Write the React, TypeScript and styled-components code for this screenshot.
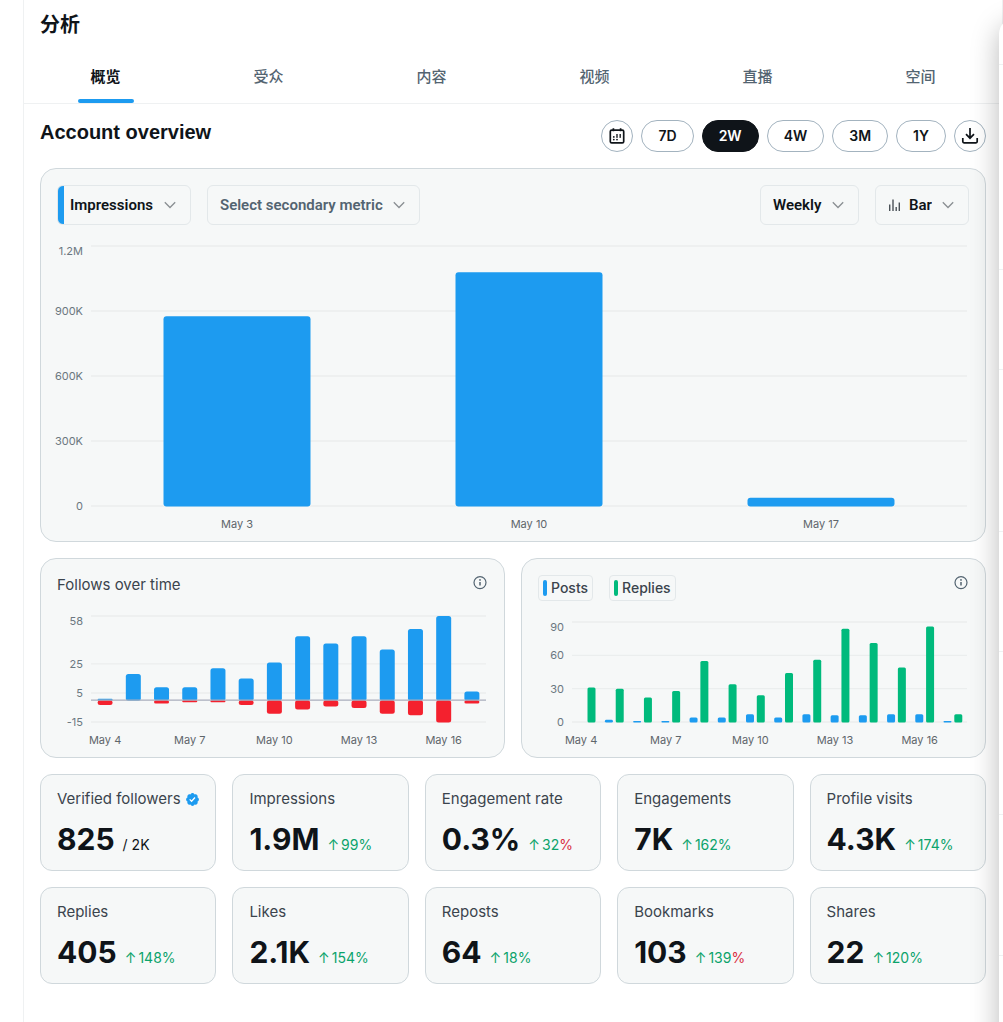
import React, { useLayoutEffect, useRef, useState } from 'react';
import styled, { createGlobalStyle } from 'styled-components';

const colors = {
  ink: '#0f1419',
  body: '#3b444d',
  muted: '#536471',
  axis: '#6b7780',
  line: '#eff1f2',
  grid: '#ebeeee',
  card: '#f6f8f8',
  cardBorder: '#d0d8dc',
  controlBorder: '#e3e8ea',
  blue: '#1d9bf0',
  green: '#00ba7c',
  deltaGreen: '#0ba36b',
  red: '#f4212e',
};

const fonts = {
  base: 'Inter, "Noto Sans CJK SC", sans-serif',
  control: 'Roboto, "Noto Sans CJK SC", sans-serif',
  title: '"Liberation Sans", "Noto Sans CJK SC", sans-serif',
  cjk: '"Noto Sans CJK SC", sans-serif',
};

const GlobalStyle = createGlobalStyle`
  * { box-sizing: border-box; }
  body {
    margin: 0;
    background: #fff;
    color: ${colors.ink};
    font-family: ${fonts.base};
    font-size: 15px;
  }
  h1, h2, h3, p { margin: 0; }
  button, select { font: inherit; color: inherit; cursor: pointer; }
`;

const Page = styled.div`
  position: relative;
  min-height: 100vh;
  padding-left: 23px;
`;

const Main = styled.main`
  min-height: 100vh;
  border-left: 1px solid ${colors.line};
  border-right: 1px solid ${colors.line};
`;

const PageHeader = styled.header`
  display: flex;
  align-items: center;
  height: 48px;
  padding: 0 16px;
`;

const PageTitle = styled.h1`
  font-family: ${fonts.cjk};
  font-size: 20px;
  line-height: 24px;
  font-weight: 700;
`;

const Tabs = styled.nav`
  display: flex;
  height: 56px;
  border-bottom: 1px solid ${colors.line};
`;

const Tab = styled.a<{ $active: boolean }>`
  flex: 1;
  display: flex;
  flex-direction: column;
  align-items: center;
  font-family: ${fonts.cjk};
  font-size: 15px;
  line-height: 20px;
  font-weight: ${p => (p.$active ? 700 : 500)};
  color: ${p => (p.$active ? colors.ink : colors.muted)};
  text-decoration: none;
`;

const TabLabel = styled.span`
  flex: 1;
  display: flex;
  align-items: center;
  padding-top: 4px;
`;

const TabIndicator = styled.span<{ $active: boolean }>`
  width: 56px;
  height: 4px;
  border-radius: 4px;
  background: ${p => (p.$active ? colors.blue : 'transparent')};
`;

const Content = styled.div`
  display: grid;
  gap: 16px;
  padding: 16px;
`;

const Overview = styled.div`
  display: flex;
  justify-content: space-between;
  align-items: flex-start;
`;

const SectionTitle = styled.h2`
  font-family: ${fonts.title};
  font-size: 20px;
  line-height: 24px;
  font-weight: 700;
`;

const Toolbar = styled.div`
  display: flex;
  gap: 8px;
`;

const Pill = styled.button<{ $active?: boolean }>`
  height: 32px;
  padding: 0 16px;
  border: 1px solid ${p => (p.$active ? colors.ink : '#a3b3bf')};
  border-radius: 16px;
  background: ${p => (p.$active ? colors.ink : '#fff')};
  color: ${p => (p.$active ? '#fff' : colors.ink)};
  font-size: 14px;
  line-height: 20px;
  font-weight: 600;
`;

const RoundButton = styled(Pill)`
  display: grid;
  place-items: center;
  width: 32px;
  padding: 0;
`;

const Card = styled.section`
  min-width: 0;
  border: 1px solid ${colors.cardBorder};
  border-radius: 16px;
  background: ${colors.card};
  padding: 16px 16px 8px;
`;

const ControlBar = styled.div`
  display: flex;
  justify-content: space-between;
  margin-bottom: 8px;
`;

const ControlGroup = styled.div`
  display: flex;
  gap: 16px;
`;

const Dropdown = styled.label<{ $marked?: boolean }>`
  display: flex;
  align-items: center;
  gap: 8px;
  height: 40px;
  padding: 0 12px;
  border: 1px solid ${colors.controlBorder};
  border-radius: 6px;
  background: ${p => (p.$marked ? `linear-gradient(${colors.blue}, ${colors.blue}) 0 0 / 6px 100% no-repeat` : 'none')};
  color: #8a8f93;
`;

const SelectBox = styled.select<{ $muted?: boolean }>`
  appearance: none;
  border: 0;
  padding: 0;
  background: transparent;
  font-family: ${fonts.control};
  font-size: 15px;
  line-height: 20px;
  font-weight: 600;
  color: ${p => (p.$muted ? colors.muted : colors.ink)};
`;

const TwoColumns = styled.div`
  display: grid;
  grid-template-columns: repeat(2, minmax(0, 1fr));
  gap: 16px;
`;

const CardHeader = styled.div`
  display: flex;
  justify-content: space-between;
  align-items: flex-start;
  height: 26px;
`;

const CardTitle = styled.h3`
  font-size: 15px;
  line-height: 20px;
  font-weight: 400;
  color: ${colors.body};
`;

const InfoButton = styled.button`
  display: flex;
  padding: 0;
  border: 0;
  background: none;
  color: ${colors.muted};
`;

const LegendButton = styled.button`
  display: flex;
  align-items: center;
  gap: 4px;
  height: 26px;
  padding: 0 4px;
  border: 1px solid ${colors.controlBorder};
  border-radius: 4px;
  background: none;
  font-size: 14px;
  line-height: 20px;
  font-weight: 500;
  color: ${colors.body};
`;

const Swatch = styled.span<{ $color: string }>`
  width: 4px;
  height: 16px;
  border-radius: 2px;
  background: ${p => p.$color};
`;

const ChartFrame = styled.div`
  min-width: 0;
`;

const ChartSvg = styled.svg`
  display: block;
  width: 100%;
  overflow: visible;
  font-family: ${fonts.base};
  font-size: 11px;
`;

const StatGrid = styled.div`
  display: grid;
  grid-template-columns: repeat(5, minmax(0, 1fr));
  gap: 16px;
`;

const StatCard = styled.section`
  display: grid;
  gap: 16px;
  padding: 16px 12px 15px 16px;
  border: 1px solid ${colors.cardBorder};
  border-radius: 12px;
  background: ${colors.card};
  white-space: nowrap;
`;

const StatLabel = styled.h3`
  display: flex;
  align-items: center;
  gap: 4px;
  font-size: 15px;
  line-height: 16px;
  font-weight: 400;
  color: ${colors.body};
`;

const StatRow = styled.p`
  display: flex;
  align-items: baseline;
  gap: 8px;
  height: 32px;
`;

const StatValue = styled.strong`
  font-size: 30px;
  line-height: 32px;
  font-weight: 700;
`;

const StatTotal = styled.span`
  font-size: 14px;
  line-height: 16px;
`;

const Delta = styled.span`
  display: flex;
  align-items: baseline;
  gap: 2px;
  font-size: 14px;
  line-height: 16px;
  color: ${colors.deltaGreen};
`;

const Percent = styled.span<{ $red?: boolean }>`
  color: ${p => (p.$red ? '#d92f43' : 'inherit')};
`;

const OverlayLayer = styled.div`
  position: absolute;
  inset: 0;
  overflow: hidden;
  pointer-events: none;
`;

const Drawer = styled.aside`
  position: absolute;
  top: 18px;
  bottom: -48px;
  left: calc(100% - 4px);
  width: 320px;
  border-radius: 16px 0 0 0;
  background: #fff;
  box-shadow: 0 8px 28px rgba(0, 0, 0, 0.28);
`;

const DrawerRow = styled.div<{ $height: number }>`
  height: ${p => p.$height}px;
  border-bottom: 1px solid ${colors.line};
`;

function useWidth(initial: number) {
  const ref = useRef<HTMLDivElement>(null);
  const [width, setWidth] = useState(initial);
  useLayoutEffect(() => {
    const node = ref.current;
    if (!node) return;
    const measure = () => setWidth(node.clientWidth);
    measure();
    const observer = new ResizeObserver(measure);
    observer.observe(node);
    return () => observer.disconnect();
  }, []);
  return [ref, width] as const;
}

type Series = { color: string; values: number[] };
type ChartProps = {
  label: string;
  initialWidth: number;
  height: number;
  top: number;
  bottom: number;
  min: number;
  max: number;
  ticks: { value: number; text: string }[];
  series: Series[];
  grouped?: boolean;
  barWidth: (band: number) => number;
  radius: number;
  names: string[];
  every: number;
  zeroLine?: boolean;
};

const AXIS = 34;
const EDGE = 2;

function BarChart(p: ChartProps) {
  const [ref, width] = useWidth(p.initialWidth);
  const plot = width - AXIS - EDGE;
  const count = p.series[0].values.length;
  const band = plot / count;
  const bar = p.barWidth(band);
  const y = (v: number) => p.bottom - ((v - p.min) / (p.max - p.min)) * (p.bottom - p.top);
  const shift = p.grouped ? bar / 2 + 1.4 : 0;
  return (
    <ChartFrame ref={ref}>
      <ChartSvg height={p.height} role="img" aria-label={p.label}>
        {p.ticks.map(t => {
          const ty = y(t.value);
          return (
            <g key={t.text}>
              <line x1={AXIS} x2={width - EDGE} y1={ty} y2={ty} stroke={colors.grid} strokeWidth={1.4} />
              <text x={AXIS - 8} y={(t.value === p.max ? ty + 5 : ty) + 4} textAnchor="end" fill={colors.axis}>
                {t.text}
              </text>
            </g>
          );
        })}
        {p.series.map((s, si) =>
          s.values.map((v, i) => {
            if (!v) return null;
            const center = AXIS + band * (i + 0.5) + (si ? shift : -shift);
            const start = Math.min(y(v), y(0));
            const h = Math.abs(y(v) - y(0)) + 0.5;
            const r = Math.min(p.radius, h / 2);
            return <rect key={`${si}-${i}`} x={center - bar / 2} y={start} width={bar} height={h} rx={r} fill={s.color} />;
          }),
        )}
        {p.zeroLine && (
          <line x1={AXIS} x2={width - EDGE} y1={y(0)} y2={y(0)} stroke="#a9aebd" strokeWidth={1.3} />
        )}
        {p.names.map((n, i) => (
          <text
            key={n}
            x={AXIS + band * (i * p.every + 0.5) - (p.grouped ? 5 : 0)}
            y={p.height - 5}
            textAnchor="middle"
            fill="#5f666b"
          >
            {n}
          </text>
        ))}
      </ChartSvg>
    </ChartFrame>
  );
}

const Chevron = () => (
  <svg width="16" height="16" viewBox="0 0 16 16" fill="none" stroke="currentColor" strokeWidth="1.3" aria-hidden="true">
    <path d="M2.8 5.3 8 10.5l5.2-5.2" />
  </svg>
);

const BarsIcon = () => (
  <svg width="13" height="14" viewBox="0 0 13 14" fill="none" stroke="#4b5258" strokeWidth="1.4" aria-hidden="true">
    <path d="M1.7 6.5V13M5 1.5V13M8.2 9V13M11.3 4.5V13" />
  </svg>
);

const CalendarIcon = () => (
  <svg width="18" height="18" viewBox="0 0 18 18" fill="none" stroke={colors.ink} aria-hidden="true">
    <rect x="2.3" y="3.2" width="13.4" height="12.6" rx="1.4" strokeWidth="1.7" />
    <path d="M5.4 1.2v3M12.6 1.2v3" strokeWidth="1.7" />
    <g fill={colors.ink} stroke="none">
      <circle cx="9" cy="8" r="0.9" />
      <circle cx="12.2" cy="8" r="0.9" />
      <circle cx="5.8" cy="9.9" r="0.9" />
      <circle cx="9" cy="9.9" r="0.9" />
      <circle cx="12.2" cy="9.9" r="0.9" />
      <circle cx="5.8" cy="12.6" r="0.9" />
      <circle cx="9" cy="12.6" r="0.9" />
    </g>
  </svg>
);

const DownloadIcon = () => (
  <svg width="18" height="18" viewBox="0 0 18 18" fill="none" stroke={colors.ink} strokeWidth="1.7" aria-hidden="true">
    <path d="M9 1v10M5 7.2l4 4 4-4" />
    <path d="M1.8 11v3.6c0 .7.5 1.2 1.2 1.2h12c.7 0 1.2-.5 1.2-1.2V11" />
  </svg>
);

const InfoIcon = () => (
  <svg width="16" height="16" viewBox="0 0 16 16" fill="none" stroke="currentColor" strokeWidth="1.2" aria-hidden="true">
    <circle cx="8" cy="7.6" r="6" />
    <path d="M8 6.9v3.7" strokeWidth="1.5" />
    <circle cx="8" cy="4.9" r="0.9" fill="currentColor" stroke="none" />
  </svg>
);

const VerifiedIcon = () => (
  <svg width="15" height="15" viewBox="0 0 22 22" aria-label="Verified" role="img">
    <path
      fill={colors.blue}
      d="M20.396 11c-.018-.646-.215-1.275-.57-1.816-.354-.54-.852-.972-1.438-1.246.223-.607.27-1.264.14-1.897-.131-.634-.437-1.218-.882-1.687-.47-.445-1.053-.75-1.687-.882-.633-.13-1.29-.083-1.897.14-.273-.587-.704-1.086-1.245-1.44S11.647 1.62 11 1.604c-.646.017-1.273.213-1.813.568s-.969.854-1.24 1.44c-.608-.223-1.267-.272-1.902-.14-.635.13-1.22.436-1.69.882-.445.47-.749 1.055-.878 1.688-.13.633-.08 1.29.144 1.896-.587.274-1.087.705-1.443 1.245-.356.54-.555 1.17-.574 1.817.02.647.218 1.276.574 1.817.356.54.856.972 1.443 1.245-.224.606-.274 1.263-.144 1.896.13.634.433 1.218.877 1.688.47.443 1.054.747 1.687.878.633.132 1.29.084 1.897-.136.274.586.705 1.084 1.246 1.439.54.354 1.17.551 1.816.569.647-.016 1.276-.213 1.817-.567s.972-.854 1.245-1.44c.604.239 1.266.296 1.903.164.636-.132 1.22-.447 1.68-.907.46-.46.776-1.044.908-1.681s.075-1.299-.165-1.903c.586-.274 1.084-.705 1.439-1.246.354-.54.551-1.17.569-1.816z"
    />
    <path fill="#fff" d="m9.662 14.85-3.429-3.428 1.293-1.302 2.072 2.072 4.4-4.794 1.347 1.246z" />
  </svg>
);

const tabs = ['概览', '受众', '内容', '视频', '直播', '空间'];
const ranges = ['7D', '2W', '4W', '3M', '1Y'];
const days = ['May 4', 'May 7', 'May 10', 'May 13', 'May 16'];

type Stat = { label: string; value: string; total?: string; change?: string; red?: boolean };
const stats: Stat[] = [
  { label: 'Verified followers', value: '825', total: '2K' },
  { label: 'Impressions', value: '1.9M', change: '99' },
  { label: 'Engagement rate', value: '0.3%', change: '32', red: true },
  { label: 'Engagements', value: '7K', change: '162' },
  { label: 'Profile visits', value: '4.3K', change: '174' },
  { label: 'Replies', value: '405', change: '148' },
  { label: 'Likes', value: '2.1K', change: '154' },
  { label: 'Reposts', value: '64', change: '18' },
  { label: 'Bookmarks', value: '103', change: '139', red: true },
  { label: 'Shares', value: '22', change: '120' },
];

function Picker(p: { name: string; value: string; marked?: boolean; muted?: boolean; icon?: React.ReactNode }) {
  return (
    <Dropdown $marked={p.marked}>
      {p.icon}
      <SelectBox aria-label={p.name} $muted={p.muted}>
        <option>{p.value}</option>
      </SelectBox>
      <Chevron />
    </Dropdown>
  );
}

export default function App() {
  const [range, setRange] = useState('2W');
  return (
    <Page>
      <GlobalStyle />
      <Main>
        <PageHeader>
          <PageTitle>分析</PageTitle>
        </PageHeader>
        <Tabs>
          {tabs.map((t, i) => (
            <Tab key={t} href="#" $active={i === 0}>
              <TabLabel>{t}</TabLabel>
              <TabIndicator $active={i === 0} />
            </Tab>
          ))}
        </Tabs>
        <Content>
          <Overview>
            <SectionTitle>Account overview</SectionTitle>
            <Toolbar>
              <RoundButton aria-label="Choose dates">
                <CalendarIcon />
              </RoundButton>
              {ranges.map(r => (
                <Pill key={r} $active={r === range} onClick={() => setRange(r)}>
                  {r}
                </Pill>
              ))}
              <RoundButton aria-label="Download">
                <DownloadIcon />
              </RoundButton>
            </Toolbar>
          </Overview>

          <Card>
            <ControlBar>
              <ControlGroup>
                <Picker name="Primary metric" value="Impressions" marked />
                <Picker name="Secondary metric" value="Select secondary metric" muted />
              </ControlGroup>
              <ControlGroup>
                <Picker name="Interval" value="Weekly" />
                <Picker name="Chart type" value="Bar" icon={<BarsIcon />} />
              </ControlGroup>
            </ControlBar>
            <BarChart
              label="Impressions by week"
              initialWidth={912}
              height={300}
              top={13}
              bottom={273}
              min={0}
              max={1200}
              ticks={[1200, 900, 600, 300, 0].map(v => ({ value: v, text: v === 1200 ? '1.2M' : v ? `${v}K` : '0' }))}
              series={[{ color: colors.blue, values: [876, 1079, 38] }]}
              barWidth={b => b / 2 + 1}
              radius={3}
              names={['May 3', 'May 10', 'May 17']}
              every={1}
            />
          </Card>

          <TwoColumns>
            <Card>
              <CardHeader>
                <CardTitle>Follows over time</CardTitle>
                <InfoButton aria-label="About follows over time">
                  <InfoIcon />
                </InfoButton>
              </CardHeader>
              <BarChart
                label="Follows over time"
                initialWidth={431}
                height={148}
                top={15}
                bottom={121}
                min={-15}
                max={58}
                ticks={[58, 25, 5, -15].map(v => ({ value: v, text: String(v) }))}
                series={[
                  { color: colors.blue, values: [1, 18, 9, 9, 22, 15, 26, 44, 39, 44, 35, 49, 58, 6] },
                  { color: colors.red, values: [-3, 0, -2, -1, -1, -3, -9, -6, -4, -5, -9, -10, -15, -2] },
                ]}
                barWidth={() => 15}
                radius={2.5}
                names={days}
                every={3}
                zeroLine
              />
            </Card>
            <Card>
              <CardHeader>
                <ControlGroup>
                  <LegendButton>
                    <Swatch $color={colors.blue} />
                    Posts
                  </LegendButton>
                  <LegendButton>
                    <Swatch $color={colors.green} />
                    Replies
                  </LegendButton>
                </ControlGroup>
                <InfoButton aria-label="About posts and replies">
                  <InfoIcon />
                </InfoButton>
              </CardHeader>
              <BarChart
                label="Posts and replies"
                initialWidth={431}
                height={148}
                top={21}
                bottom={121}
                min={0}
                max={90}
                ticks={[90, 60, 30, 0].map(v => ({ value: v, text: String(v) }))}
                series={[
                  { color: colors.blue, values: [0, 2, 1, 1, 4, 4, 7, 4, 7, 6, 6, 7, 7, 1] },
                  { color: colors.green, values: [31, 30, 22, 28, 55, 34, 24, 44, 56, 84, 71, 49, 86, 7] },
                ]}
                grouped
                barWidth={() => 8}
                radius={1.5}
                names={days}
                every={3}
              />
            </Card>
          </TwoColumns>

          <StatGrid>
            {stats.map(s => (
              <StatCard key={s.label}>
                <StatLabel>
                  {s.label}
                  {s.total && <VerifiedIcon />}
                </StatLabel>
                <StatRow>
                  <StatValue>{s.value}</StatValue>
                  {s.total && <StatTotal>/ {s.total}</StatTotal>}
                  {s.change && (
                    <Delta>
                      <span>↑</span>
                      <span>
                        {s.change}
                        <Percent $red={s.red}>%</Percent>
                      </span>
                    </Delta>
                  )}
                </StatRow>
              </StatCard>
            ))}
          </StatGrid>
        </Content>
      </Main>
      <OverlayLayer>
        <Drawer>
          {[47, 205, 100, 162, 120, 163, 141].map((h, i) => (
            <DrawerRow key={i} $height={h} />
          ))}
        </Drawer>
      </OverlayLayer>
    </Page>
  );
}
